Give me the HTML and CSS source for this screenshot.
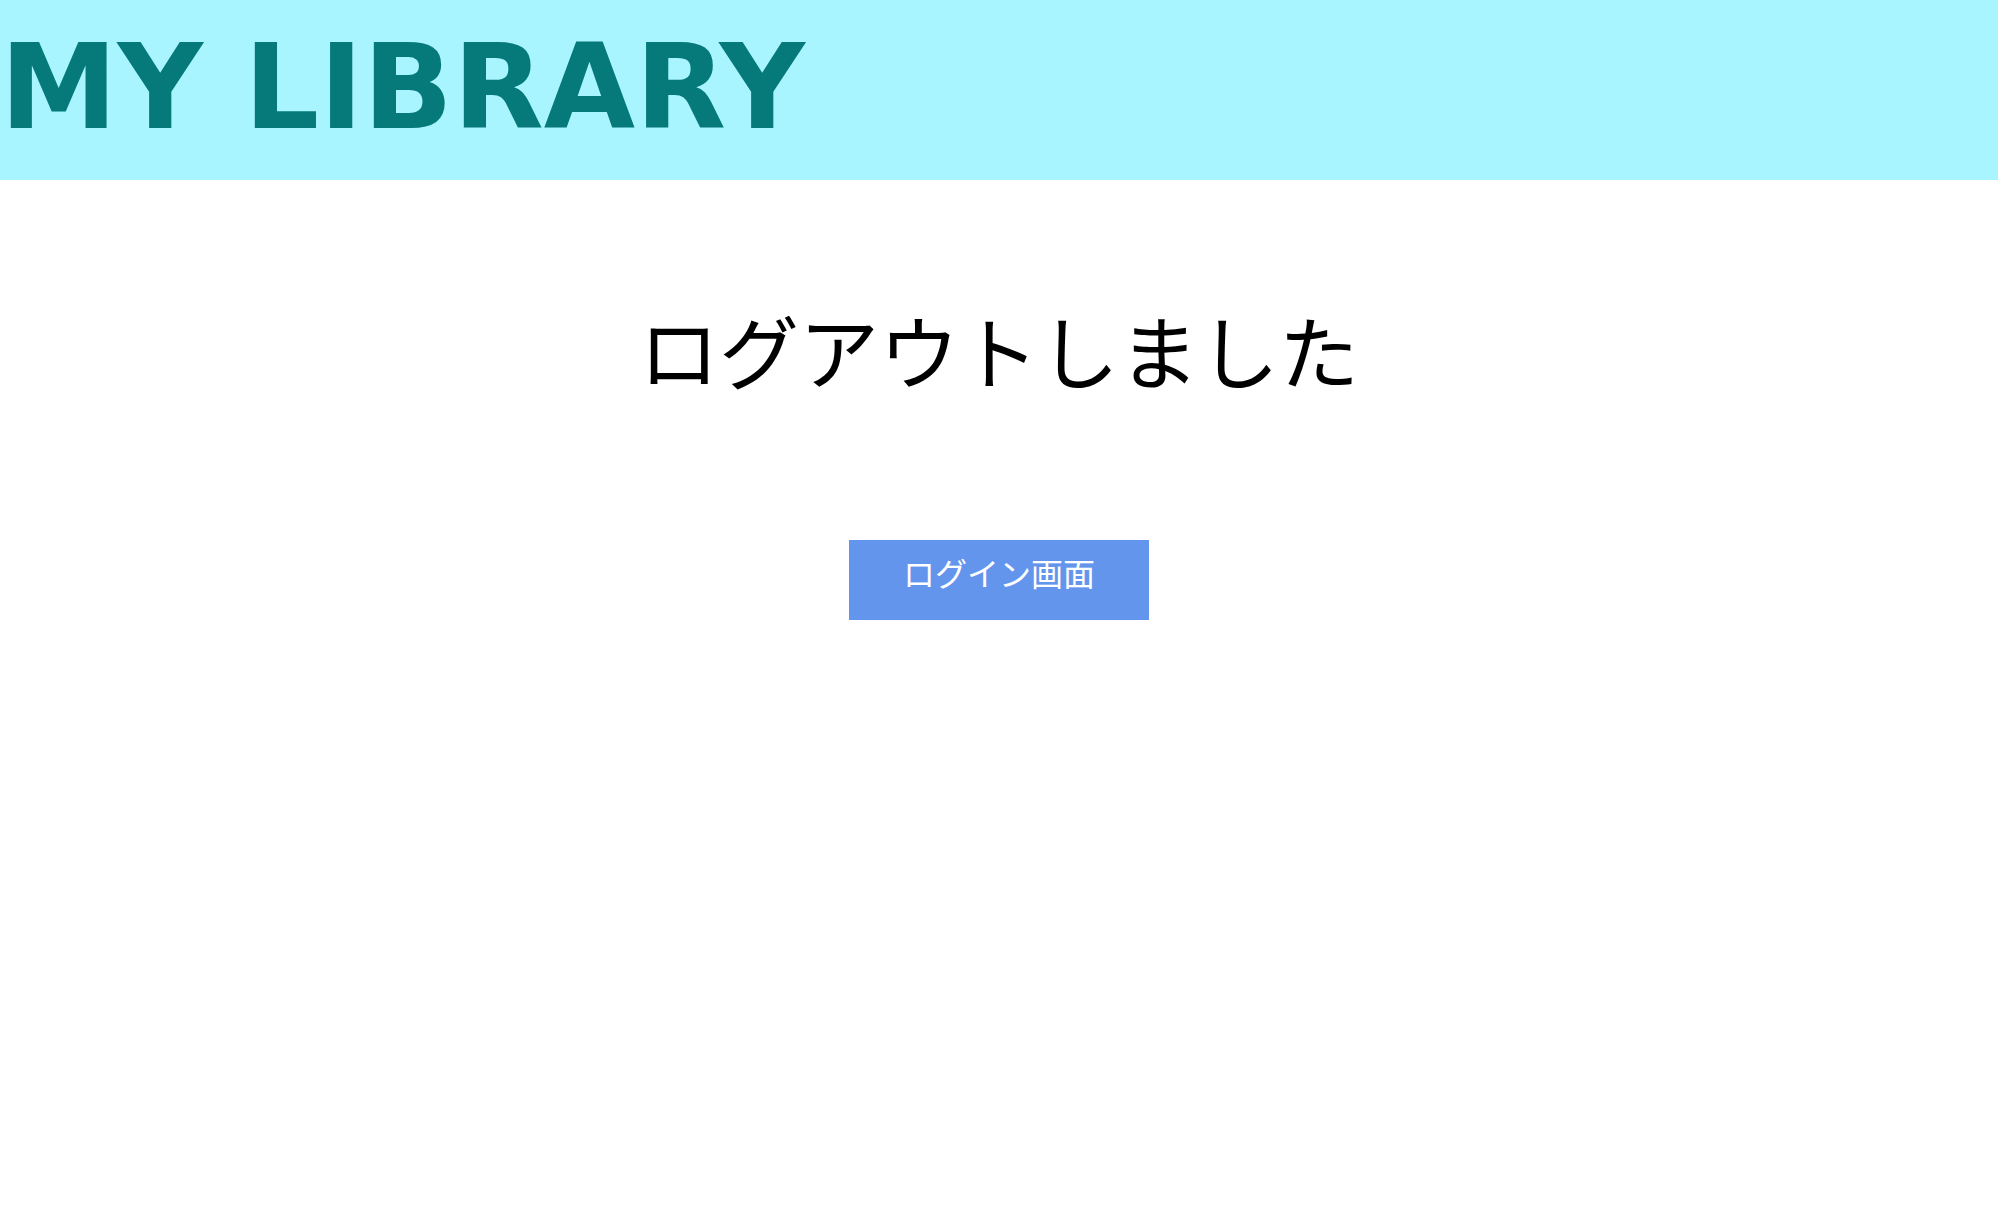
FILE: index.html
```html
<!DOCTYPE html>
<html lang="ja">
<head>
<meta charset="utf-8">
<meta name="viewport" content="width=device-width, initial-scale=1">
<title>MY LIBRARY</title>
<link rel="stylesheet" href="styles.css">
</head>
<body>
<header class="header">
<h1 class="title">MY LIBRARY</h1>
</header>
<main class="main">
<p class="message">ログアウトしました</p>
<a class="login-link" href="#">ログイン画面</a>
</main>
</body>
</html>
```
FILE: styles.css
```css
body {
  margin: 0;
  background: #fff;
  font-family: "Noto Sans CJK JP", sans-serif;
}

.header {
  padding: 12px 0 18px;
  background: #a8f5ff;
}

.title {
  margin: 0;
  color: #067a7a;
  font: bold 118px/150px "DejaVu Sans", Verdana, sans-serif;
}

.main {
  display: flex;
  flex-direction: column;
  align-items: center;
}

.message {
  margin: 103px 0 127px;
  color: #000;
  font-size: 80px;
  line-height: 130px;
}

.login-link {
  box-sizing: border-box;
  min-width: 300px;
  padding: 0 0 16px;
  background: #6495ed;
  color: #fff;
  font-size: 32px;
  line-height: 64px;
  text-align: center;
  text-decoration: none;
}
```
